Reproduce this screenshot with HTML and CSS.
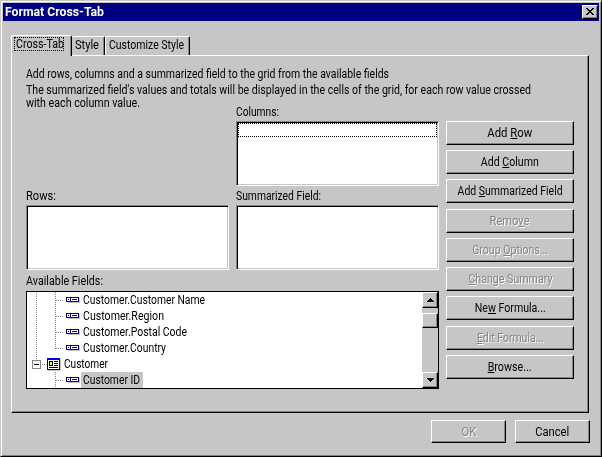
FILE: index.html
```html
<!DOCTYPE html>
<html lang="en">
<head>
<meta charset="utf-8">
<title>Format Cross-Tab</title>
<link rel="stylesheet" href="styles.css">
</head>
<body>
<div class="window">
  <header class="titlebar">
    <span class="fit" data-w="99">Format Cross-Tab</span>
    <button class="close" aria-label="Close"><svg width="8" height="7" viewBox="0 0 8 7" shape-rendering="crispEdges"><path d="M0 0h2v1h1v1h2V1h1V0h2v1H7v1H6v1H5v1h1v1h1v1h1v1H6V6H5V5H3v1H2v1H0V6h1V5h1V4h1V3H2V2H1V1H0z"/></svg></button>
  </header>
  <nav class="tabs">
    <div class="tab active"><div class="focus"><span class="fit" data-w="48">Cross-Tab</span></div></div>
    <div class="tab style"><span class="fit" data-w="24">Style</span></div>
    <div class="tab custom"><span class="fit" data-w="75">Customize Style</span></div>
  </nav>
  <main class="panel">
    <div class="intro">
      <p><span class="fit" data-w="363">Add rows, columns and a summarized field to the grid from the available fields</span></p>
      <p class="tight"><span class="fit" data-w="505">The summarized field's values and totals will be displayed in the cells of the grid, for each row value crossed</span></p>
      <p class="tight"><span class="fit" data-w="114">with each column value.</span></p>
    </div>
    <div class="body">
      <div class="fields">
        <section class="group columns"><label><span class="fit" data-w="43">Columns:</span></label><div class="list"><div class="cursor"></div></div></section>
        <section class="group"><label><span class="fit" data-w="30">Rows:</span></label><div class="list"></div></section>
        <section class="group"><label><span class="fit" data-w="85">Summarized Field:</span></label><div class="list"></div></section>
        <section class="available">
          <label><span class="fit" data-w="77">Available Fields:</span></label>
          <div class="treebox">
            <svg class="rails" width="40" height="96" viewBox="0 0 40 96" shape-rendering="crispEdges">
              <defs>
                <g id="field"><path fill="#c6c6c6" d="M1 1h13v5H1z"/><path fill="#00008c" d="M0 0h13v5H0z"/><path fill="#fff" d="M1 1h3v3H1zM5 1h7v3H5z"/><path fill="#00008c" d="M2 2h1v1H2zM6 2h5v1H6z"/></g>
              </defs>
              <g fill="none" stroke="#848484" stroke-dasharray="1 1">
                <path d="M9.500 0v68M28.500 0v57M28.500 80v16M29 8.500h8M29 24.500h8M29 40.500h8M29 56.500h8M15 72.500h4M29 88.500h8"/>
              </g>
              <path fill="none" stroke="#848484" d="M5.500 68.500h8v8h-8z"/><path d="M7 72h5v1H7z"/>
            </svg>
            <div class="tree">
              <div class="row leaf"><svg width="14" height="6"><use href="#field"/></svg><span class="name"><span class="fit" data-w="122">Customer.Customer Name</span></span></div>
              <div class="row leaf"><svg width="14" height="6"><use href="#field"/></svg><span class="name"><span class="fit" data-w="81">Customer.Region</span></span></div>
              <div class="row leaf"><svg width="14" height="6"><use href="#field"/></svg><span class="name"><span class="fit" data-w="104">Customer.Postal Code</span></span></div>
              <div class="row leaf"><svg width="14" height="6"><use href="#field"/></svg><span class="name"><span class="fit" data-w="83">Customer.Country</span></span></div>
              <div class="row table"><svg width="14" height="13" shape-rendering="crispEdges"><path fill="#c6c6c6" d="M1 1h13v12H1z"/><path fill="#00008c" d="M0 0h13v12H0z"/><path fill="#00f" d="M0 0h13v2H0z"/><path fill="#fff" d="M1 2h11v9H1z"/><path fill="#000" d="M2 3h4v5H2zM7 3h4v1H7zM7 5h4v1H7zM7 7h4v1H7zM2 9h9v1H2z"/><path fill="#ff0" d="M3 4h2v3H3z"/></svg><span class="name"><span class="fit" data-w="44">Customer</span></span></div>
              <div class="row leaf"><svg width="14" height="6"><use href="#field"/></svg><span class="name selected"><span class="fit" data-w="57">Customer ID</span></span></div>
            </div>
            <div class="scrollbar">
              <div class="arrow"><svg width="7" height="4" shape-rendering="crispEdges"><path d="M3 0h1v1h1v1h1v1h1v1H0V3h1V2h1V1h1z"/></svg></div>
              <div class="thumb"></div>
              <div class="arrow down"><svg width="7" height="4" shape-rendering="crispEdges"><path d="M0 0h7v1H6v1H5v1H4v1H3V3H2V2H1V1H0z"/></svg></div>
            </div>
          </div>
        </section>
      </div>
      <div class="actions">
        <button class="btn"><span class="fit" data-w="45">Add <u>R</u>ow</span></button>
        <button class="btn"><span class="fit" data-w="58">Add <u>C</u>olumn</span></button>
        <button class="btn"><span class="fit" data-w="105">Add <u>S</u>ummarized Field</span></button>
        <button class="btn off extra"><span class="fit" data-w="40">Remo<u>v</u>e</span></button>
        <button class="btn off"><span class="fit" data-w="76">Group <u>O</u>ptions...</span></button>
        <button class="btn off"><span class="fit" data-w="84"><u>C</u>hange Summary</span></button>
        <button class="btn"><span class="fit" data-w="71">Ne<u>w</u> Formula...</span></button>
        <button class="btn off extra"><span class="fit" data-w="67"><u>E</u>dit Formula...</span></button>
        <button class="btn"><span class="fit" data-w="44"><u>B</u>rowse...</span></button>
      </div>
    </div>
  </main>
  <footer class="footer">
    <button class="btn off"><span class="fit" data-w="15">OK</span></button>
    <button class="btn"><span class="fit" data-w="34">Cancel</span></button>
  </footer>
</div>
<script src="fit.js"></script>
</body>
</html>
```
FILE: styles.css
```css
* { box-sizing: border-box; }
body { margin: 0; font: 12px/16px Roboto, "Liberation Sans", sans-serif; color: #000; background: #c6c6c6; }
p { margin: 0; }
button { font: inherit; color: inherit; padding: 0; margin: 0; border-radius: 0; background: #c6c6c6; }
svg { display: block; flex: none; }
label { display: block; height: 16px; }
.fit { display: inline-block; white-space: nowrap; transform-origin: 0 50%; }
u { text-decoration: underline; text-decoration-thickness: 1px; text-underline-offset: 1px; text-decoration-skip-ink: none; }

.window {
  width: 602px; height: 457px; padding: 2px 1px 0 2px; overflow: hidden; background: #c6c6c6;
  border: 1px solid #000; border-top-color: #c6c6c6; border-left-color: #c6c6c6;
  box-shadow: inset 1px 1px #fff, inset -1px -1px #848484;
}
.titlebar {
  display: flex; justify-content: space-between; height: 18px; margin-right: 1px; padding: 1px 1px 0 2px;
  background: #000084; color: #fff; font-weight: bold;
}
.close {
  display: flex; justify-content: center; align-items: center; width: 16px; height: 14px; margin-top: 1px; color: #000;
  border: 1px solid #000; border-top-color: #fff; border-left-color: #fff; box-shadow: inset -1px -1px #848484;
}
.close svg { margin-top: -1px; }

.tabs { display: flex; align-items: flex-end; height: 20px; margin: 14px 0 0 8px; }
.tab {
  position: relative; height: 19px; padding: 0 0 0 3px; background: #c6c6c6;
  border: solid #fff; border-width: 1px 1px 0 1px; border-right-color: #000; border-radius: 2px 2px 0 0;
  box-shadow: inset -1px 0 #848484;
}
.tab.active { z-index: 1; width: 61px; height: 21px; margin-bottom: -1px; padding: 1px 0 0 2px; }
.tab.style { width: 33px; border-left: 0; }
.tab.custom { width: 85px; }
.focus { width: 50px; height: 14px; padding-left: 1px; border: 1px dotted #000; line-height: 13px; }

.panel {
  width: 578px; height: 358px; margin-left: 8px; padding: 10px 13px 0 14px;
  border: 1px solid #000; border-top-color: #fff; border-left-color: #fff; box-shadow: inset -1px -1px #848484;
}
.intro { height: 38px; }
.tight { height: 13px; line-height: 13px; }
.tight:nth-child(2) { margin-top: 2px; }
.body { display: flex; gap: 7px; }
.fields { display: grid; grid-template-columns: 203px 203px; grid-template-rows: 84px 85px auto; column-gap: 7px; }
.columns { grid-column: 2; }
.group .list {
  height: 65px; margin-top: 1px; padding: 0; background: #fff;
  border: 1px solid #fff; border-top-color: #848484; border-left-color: #848484;
  box-shadow: inset 1px 1px #000, inset -1px -1px #c6c6c6;
}
.cursor { height: 14px; margin: 1px 1px 0; border: 1px dotted #000; }
.available { grid-column: 1 / 3; }
.treebox { position: relative; display: flex; height: 98px; margin-top: 2px; background: #fff; border: 1px solid #000; }
.rails { position: absolute; left: 0; top: 0; }
.tree { flex: 1; }
.row { display: flex; align-items: center; height: 16px; }
.leaf { padding-left: 39px; gap: 1px; }
.table { padding-left: 20px; gap: 0; }
.name { height: 16px; padding: 0 2px; }
.table .name { padding-left: 3px; }
.name.selected { width: 62px; background: #c6c6c6; }
.scrollbar { display: flex; flex-direction: column; width: 16px; background: #c6c6c6; }
.arrow, .thumb {
  display: flex; justify-content: center; align-items: center; height: 16px; background: #c6c6c6;
  border: 1px solid #000; border-top-color: #fff; border-left-color: #fff; box-shadow: inset -1px -1px #848484;
}
.thumb { height: 15px; margin-top: 5px; }
.down { margin-top: auto; }

.actions { display: flex; flex-direction: column; gap: 5px; width: 128px; padding-top: 17px; }
.btn {
  display: flex; justify-content: center; align-items: center; width: 128px; height: 24px; flex: none;
  border: 1px solid #000; border-top-color: #fff; border-left-color: #fff; box-shadow: inset -1px -1px #848484;
}
.btn .fit { transform-origin: 50% 50%; }
.extra { margin-top: 1px; }
.off { color: #848484; text-shadow: 1px 1px #fff; }
.footer { display: flex; justify-content: flex-end; gap: 9px; margin: 7px 10px 0 0; }
.footer .btn { width: 75px; height: 23px; }
```
FILE: fit.js
```js
// Condense each label to its nominal dialog width.
for (const el of document.querySelectorAll('.fit')) {
  const width = el.getBoundingClientRect().width;
  el.style.transform = `scaleX(${el.dataset.w / width})`;
}
```
